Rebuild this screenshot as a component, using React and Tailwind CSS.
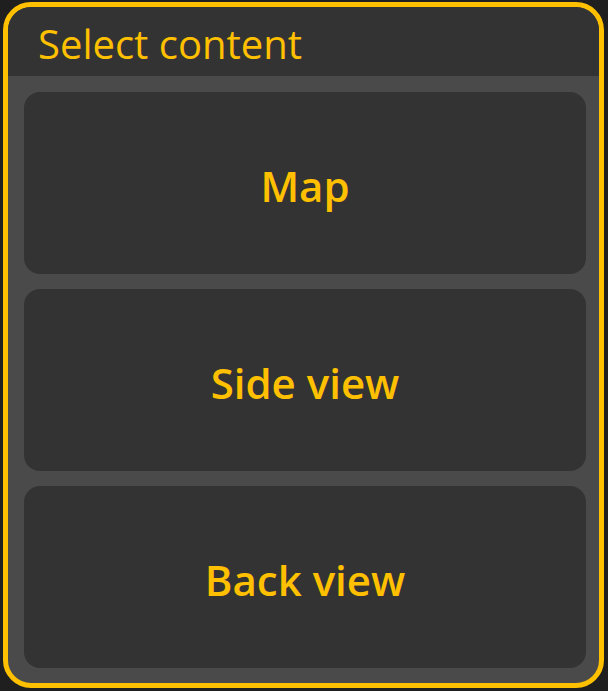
export default function App() {
  const items = ['Map', 'Side view', 'Back view'];
  return (
    <div className="h-[691px] w-[608px] bg-[#1f1f1f] pt-[2px] pl-[3px]" style={{ fontFamily: '"Open Sans", "Noto Sans", sans-serif' }}>
      <div className="flex h-[686px] w-[601px] flex-col overflow-hidden rounded-[28px] border-[5px] border-[#ffc000] bg-[#4a4a4a]">
        <div className="flex h-[69px] shrink-0 items-center bg-[#333333] pl-[30px] pt-[4px]">
          <span className="text-[40px] leading-none text-[#ffc000]">Select content</span>
        </div>
        <div className="flex flex-1 flex-col gap-[15px] pt-[16px] pl-[16px] pr-[13px] pb-[13px]">
          {items.map((label) => (
            <button
              key={label}
              type="button"
              className="flex h-[182px] w-full items-center justify-center rounded-[16px] bg-[#333333] pt-[4px] text-[42px] font-semibold text-[#ffc000]"
            >
              {label}
            </button>
          ))}
        </div>
      </div>
    </div>
  );
}
